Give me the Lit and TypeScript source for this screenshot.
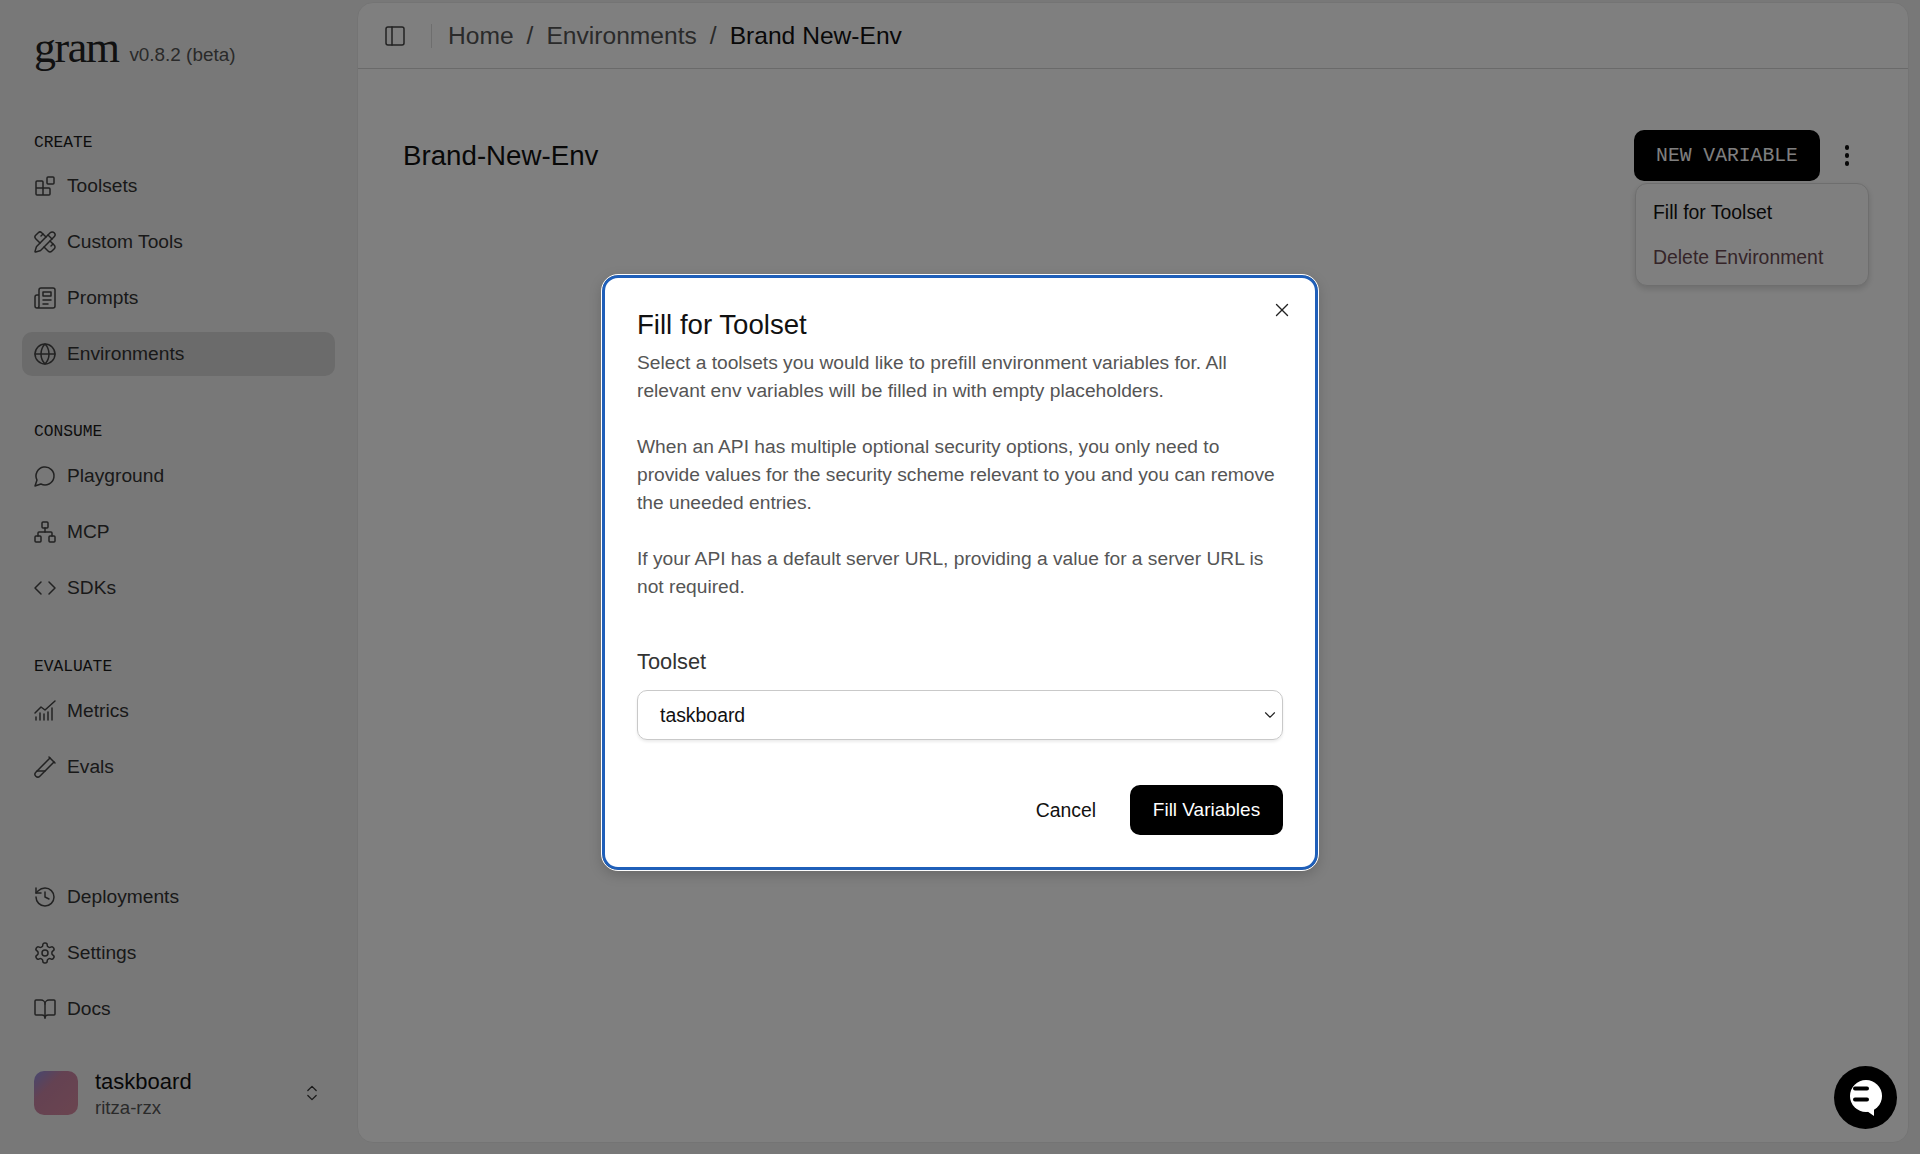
import { LitElement, html, css, svg } from "lit";
import { customElement } from "lit/decorators.js";

const I: Record<string, any> = {
  blocks: svg`<rect x="14" y="3" width="7" height="7" rx="1"/><path d="M10 21V8a1 1 0 0 0-1-1H4a1 1 0 0 0-1 1v12a1 1 0 0 0 1 1h12a1 1 0 0 0 1-1v-5a1 1 0 0 0-1-1H3"/>`,
  tools: svg`<path d="M13 7 8.7 2.7a2.41 2.41 0 0 0-3.4 0L2.7 5.3a2.41 2.41 0 0 0 0 3.4L7 13"/><path d="m8 6 2-2"/><path d="m18 16 2-2"/><path d="m17 11 4.3 4.3c.94.94.94 2.46 0 3.4l-2.6 2.6c-.94.94-2.46.94-3.4 0L11 17"/><path d="M21.174 6.812a1 1 0 0 0-3.986-3.987L3.842 16.174a2 2 0 0 0-.5.83l-1.321 4.352a.5.5 0 0 0 .623.622l4.353-1.32a2 2 0 0 0 .83-.497z"/><path d="m15 5 4 4"/>`,
  news: svg`<path d="M4 22h16a2 2 0 0 0 2-2V4a2 2 0 0 0-2-2H8a2 2 0 0 0-2 2v16a2 2 0 0 1-2 2Zm0 0a2 2 0 0 1-2-2v-9c0-1.1.9-2 2-2h2"/><path d="M18 14h-8"/><path d="M15 18h-5"/><path d="M10 6h8v4h-8V6Z"/>`,
  globe: svg`<circle cx="12" cy="12" r="10"/><path d="M12 2a14.5 14.5 0 0 0 0 20 14.5 14.5 0 0 0 0-20"/><path d="M2 12h20"/>`,
  chat: svg`<path d="M7.9 20A9 9 0 1 0 4 16.1L2 22Z"/>`,
  network: svg`<rect x="16" y="16" width="6" height="6" rx="1"/><rect x="2" y="16" width="6" height="6" rx="1"/><rect x="9" y="2" width="6" height="6" rx="1"/><path d="M5 16v-3a1 1 0 0 1 1-1h12a1 1 0 0 1 1 1v3"/><path d="M12 12V8"/>`,
  code: svg`<path d="m16 18 6-6-6-6"/><path d="m8 6-6 6 6 6"/>`,
  metrics: svg`<path d="M2 14 8 8l4 3 10-9"/><path d="M3 21v-3"/><path d="M7 21v-7"/><path d="M11 21v-6"/><path d="M15 21v-8"/><path d="M19 21V9"/>`,
  tube: svg`<path d="M21 7 6.82 21.18a2.83 2.83 0 0 1-3.99-.01a2.83 2.83 0 0 1 0-4L17 3"/><path d="m16 2 6 6"/><path d="M12 16H4"/>`,
  history: svg`<path d="M3 12a9 9 0 1 0 9-9 9.75 9.75 0 0 0-6.74 2.74L3 8"/><path d="M3 3v5h5"/><path d="M12 7v5l4 2"/>`,
  gear: svg`<path d="M12.22 2h-.44a2 2 0 0 0-2 2v.18a2 2 0 0 1-1 1.73l-.43.25a2 2 0 0 1-2 0l-.15-.08a2 2 0 0 0-2.73.73l-.22.38a2 2 0 0 0 .73 2.73l.15.1a2 2 0 0 1 1 1.72v.51a2 2 0 0 1-1 1.74l-.15.09a2 2 0 0 0-.73 2.73l.22.38a2 2 0 0 0 2.73.73l.15-.08a2 2 0 0 1 2 0l.43.25a2 2 0 0 1 1 1.73V20a2 2 0 0 0 2 2h.44a2 2 0 0 0 2-2v-.18a2 2 0 0 1 1-1.73l.43-.25a2 2 0 0 1 2 0l.15.08a2 2 0 0 0 2.73-.73l.22-.39a2 2 0 0 0-.73-2.73l-.15-.08a2 2 0 0 1-1-1.74v-.5a2 2 0 0 1 1-1.74l.15-.09a2 2 0 0 0 .73-2.73l-.22-.38a2 2 0 0 0-2.73-.73l-.15.08a2 2 0 0 1-2 0l-.43-.25a2 2 0 0 1-1-1.73V4a2 2 0 0 0-2-2z"/><circle cx="12" cy="12" r="3"/>`,
  book: svg`<path d="M12 7v14"/><path d="M3 18a1 1 0 0 1-1-1V4a1 1 0 0 1 1-1h5a4 4 0 0 1 4 4 4 4 0 0 1 4-4h5a1 1 0 0 1 1 1v13a1 1 0 0 1-1 1h-6a3 3 0 0 0-3 3 3 3 0 0 0-3-3z"/>`,
  updown: svg`<path d="m7 15 5 5 5-5"/><path d="m7 9 5-5 5 5"/>`,
  panel: svg`<rect x="3" y="3" width="18" height="18" rx="2"/><path d="M9 3v18"/>`,
  x: svg`<path d="M18 6 6 18"/><path d="m6 6 12 12"/>`,
  down: svg`<path d="m6 9 6 6 6-6"/>`,
};
const icon = (n: string, cls = "ic") =>
  html`<svg class=${cls} viewBox="0 0 24 24" fill="none" stroke="currentColor" stroke-width="1.5" stroke-linecap="round" stroke-linejoin="round">${I[n]}</svg>`;

const groups = [
  { label: "CREATE", cls: "g1", items: [["blocks", "Toolsets"], ["tools", "Custom Tools"], ["news", "Prompts"], ["globe", "Environments", true]] },
  { label: "CONSUME", cls: "g2", items: [["chat", "Playground"], ["network", "MCP"], ["code", "SDKs"]] },
  { label: "EVALUATE", cls: "g3", items: [["metrics", "Metrics"], ["tube", "Evals"]] },
];
const bottom = [["history", "Deployments"], ["gear", "Settings"], ["book", "Docs"]];

@customElement("app-root")
export class AppRoot extends LitElement {
  static styles = css`
    :host { display: block; width: 100%; height: 100vh; overflow: hidden; position: relative;
      font-family: "Liberation Sans", Arial, sans-serif; color: #111; }
    * { box-sizing: border-box; }
    .shell { display: flex; height: 100%; background: #f1f1f1; padding: 2px 11px 11px 0; }
    .side { width: 357px; flex: none; display: flex; flex-direction: column; height: 100%; padding: 0 22px 0 22px; }
    .brand { display: flex; align-items: baseline; gap: 11px; padding: 21px 0 0 12px; height: 131px; flex: none; }
    .logo { font-family: "Liberation Serif", serif; font-size: 44px; line-height: 50px; letter-spacing: -1.5px; color: #222; }
    .ver { font-size: 18.9px; color: #555; position: relative; top: -1px; }
    .label { font-family: "Liberation Mono", monospace; font-size: 16.3px; line-height: 20px; padding-left: 12px; color: #1a1a1a; margin-bottom: 11px; }
    .g2 .label, .g3 .label { margin-bottom: 12px; }
    .nav { display: flex; flex-direction: column; gap: 12px; }
    .g1 { margin-bottom: 46px; }
    .g2 { margin-bottom: 47px; }
    .item { display: flex; align-items: center; gap: 10.5px; height: 44px; padding-left: 10.5px; border-radius: 10px; font-size: 19.2px; color: #333; }
    .item.on { background: #d6d6d6; }
    .ic { width: 24px; height: 24px; flex: none; color: #444; }
    .spacer { flex: 1; }
    .team { display: flex; align-items: center; height: 44px; padding-left: 12px; margin: 40px 0 28px; flex: none; }
    .avatar { width: 44px; height: 44px; border-radius: 10px; flex: none; margin-right: 17px;
      background: linear-gradient(135deg, #8f8fe0 0%, #c984a4 35%, #d68aa0 100%); }
    .who { flex: 1; display: flex; flex-direction: column; gap: 4px; }
    .who b { font-weight: 400; font-size: 22px; line-height: 25px; color: #111; }
    .who span { font-size: 18.6px; line-height: 20px; color: #555; }
    .updown { width: 20px; height: 20px; color: #333; margin-right: 13px; flex: none; }
    .panel { flex: 1; background: #fff; border: 1px solid #e9e9e9; border-radius: 16px; display: flex; flex-direction: column; min-width: 0; }
    .top { height: 66px; flex: none; display: flex; align-items: center; padding-left: 25px; border-bottom: 1px solid #d4d4d4; font-size: 24.6px; color: #555; }
    .pic { width: 24px; height: 24px; color: #444; flex: none; }
    .sep { width: 1px; height: 24px; background: #ddd; margin: 0 16px 0 24px; }
    .crumbs { display: flex; gap: 13px; }
    .crumbs .cur { color: #111; }
    .head { display: flex; align-items: center; padding: 61px 0 0 45px; position: relative; }
    .head h1 { flex: 1; margin: 0; font-weight: 400; font-size: 27.7px; line-height: 51px; color: #111; }
    .new { height: 51px; width: 186px; border: 0; background: #000; color: #fff; border-radius: 10px; padding: 0; font: 400 19.7px "Liberation Mono", monospace; }
    .dots { width: 24px; margin: 0 49px 0 15px; display: flex; flex-direction: column; align-items: center; gap: 3.5px; }
    .dots i { width: 4.5px; height: 4.5px; border-radius: 50%; background: #111; }
    .menu { position: absolute; top: 114px; left: 1277px; width: 234px; height: 103px; background: #fff; border: 1px solid #ddd; border-radius: 12px;
      box-shadow: 0 3px 6px rgba(0,0,0,.15); padding: 6px 0 0 17px; font-size: 19.4px; }
    .menu div { height: 45px; display: flex; align-items: center; }
    .menu .del { color: #6a4a52; }
    .scrim { position: absolute; inset: 0; background: rgba(0,0,0,.5); display: flex; align-items: flex-start; justify-content: center; padding-top: 275px; }
    .modal { position: relative; width: 716px; height: 595px; background: #fff; border: 3px solid #1f5fb9; outline: 1px solid #fff; border-radius: 16px;
      padding: 29px 32px 0 32px; box-shadow: 0 4px 14px rgba(0,0,0,.2); }
    .close { position: absolute; top: 21px; right: 22px; width: 22px; height: 22px; color: #222; }
    .modal h2 { margin: 0; font-weight: 400; font-size: 27.6px; line-height: 36px; color: #111; }
    .modal p { margin: 0 0 28px; font-size: 19.2px; line-height: 28px; color: #555; }
    .desc { padding-top: 6px; height: 306px; }
    .lab { font-size: 21.8px; line-height: 26px; color: #333; margin-bottom: 15px; }
    .select { height: 50px; border: 1px solid #c9c9c9; border-radius: 10px; display: flex; align-items: center; justify-content: space-between;
      padding: 0 3px 0 22px; font-size: 19.4px; color: #111; box-shadow: 0 2px 3px rgba(0,0,0,.08); }
    .chev { width: 18px; height: 18px; color: #222; }
    .foot { display: flex; justify-content: flex-end; align-items: center; margin-top: 45px; gap: 34px; }
    .cancel { font-size: 19.4px; color: #111; }
    .fill { width: 153px; height: 50px; background: #000; color: #fff; border-radius: 10px; display: flex; align-items: center; justify-content: center; font-size: 19px; }
    .bubble { position: absolute; left: 1834px; top: 1066px; width: 63px; height: 63px; border-radius: 50%; background: #000; display: flex; align-items: center; justify-content: center; }
    .bubble svg { width: 32px; height: 37px; }
  `;

  item(i: any) {
    return html`<div class="item ${i[2] ? "on" : ""}">${icon(i[0])}<span>${i[1]}</span></div>`;
  }

  render() {
    return html`
      <div class="shell">
        <aside class="side">
          <div class="brand"><span class="logo">gram</span><span class="ver">v0.8.2 (beta)</span></div>
          ${groups.map((g) => html`<div class=${g.cls}><div class="label">${g.label}</div><div class="nav">${g.items.map((i) => this.item(i))}</div></div>`)}
          <div class="spacer"></div>
          <div class="nav">${bottom.map((i) => this.item(i))}</div>
          <div class="team">
            <div class="avatar"></div>
            <div class="who"><b>taskboard</b><span>ritza-rzx</span></div>
            ${icon("updown", "updown")}
          </div>
        </aside>
        <main class="panel">
          <div class="top">
            ${icon("panel", "pic")}
            <div class="sep"></div>
            <div class="crumbs"><span>Home</span><span>/</span><span>Environments</span><span>/</span><span class="cur">Brand New-Env</span></div>
          </div>
          <div class="head">
            <h1>Brand-New-Env</h1>
            <button class="new">NEW VARIABLE</button>
            <div class="dots"><i></i><i></i><i></i></div>
            <div class="menu"><div>Fill for Toolset</div><div class="del">Delete Environment</div></div>
          </div>
        </main>
      </div>
      <div class="scrim">
        <div class="modal">
          ${icon("x", "close")}
          <h2>Fill for Toolset</h2>
          <div class="desc">
            <p>Select a toolsets you would like to prefill environment variables for. All<br />relevant env variables will be filled in with empty placeholders.</p>
            <p>When an API has multiple optional security options, you only need to<br />provide values for the security scheme relevant to you and you can remove<br />the uneeded entries.</p>
            <p>If your API has a default server URL, providing a value for a server URL is<br />not required.</p>
          </div>
          <div class="lab">Toolset</div>
          <div class="select"><span>taskboard</span>${icon("down", "chev")}</div>
          <div class="foot"><span class="cancel">Cancel</span><div class="fill">Fill Variables</div></div>
        </div>
      </div>
      <div class="bubble">
        <svg viewBox="0 0 32 37"><circle cx="16" cy="17" r="16" fill="#fff"/><path fill="#fff" d="M14 30l10 7v-8z"/><path d="M5 9.500h12M5 20.500h12" stroke="#000" stroke-width="4" stroke-linecap="round"/></svg>
      </div>
    `;
  }
}
